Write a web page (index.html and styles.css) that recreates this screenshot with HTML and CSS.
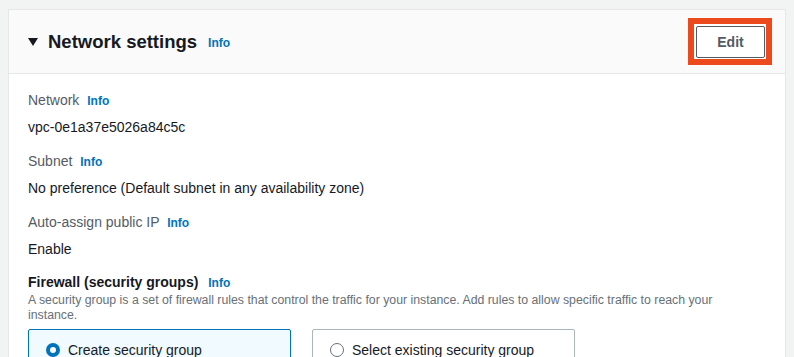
FILE: index.html
```html
<!DOCTYPE html>
<html lang="en">
  <head>
    <meta charset="UTF-8" />
    <meta name="viewport" content="width=device-width, initial-scale=1.0" />
    <title>Network settings</title>
    <link rel="stylesheet" href="styles.css">
  </head>
  <body>
    <div class="panel">
      <div class="panel-header">
        <div class="title">
          <span class="caret"></span>
          <h2>Network settings</h2>
          <a class="info" href="#">Info</a>
        </div>
        <div class="highlight">
          <button class="edit-button">Edit</button>
        </div>
      </div>
      <div class="panel-body">
        <div class="field">
          <div class="label">Network <a class="info" href="#">Info</a></div>
          <div class="value">vpc-0e1a37e5026a84c5c</div>
        </div>
        <div class="field">
          <div class="label">Subnet <a class="info" href="#">Info</a></div>
          <div class="value">No preference (Default subnet in any availability zone)</div>
        </div>
        <div class="field">
          <div class="label">Auto-assign public IP <a class="info" href="#">Info</a></div>
          <div class="value">Enable</div>
        </div>
        <div class="field firewall">
          <div class="label strong">Firewall (security groups) <a class="info" href="#">Info</a></div>
          <p class="desc">A security group is a set of firewall rules that control the traffic for your instance. Add rules to allow specific traffic to reach your instance.</p>
          <div class="choices">
            <label class="choice selected">
              <span class="radio"></span>
              Create security group
            </label>
            <label class="choice">
              <span class="radio"></span>
              Select existing security group
            </label>
          </div>
        </div>
      </div>
    </div>
  </body>
</html>
```
FILE: styles.css
```css
* {
  margin: 0;
  padding: 0;
  box-sizing: border-box;
}
html,
body {
  width: 100%;
  height: 100%;
  overflow: hidden;
}
body {
  background: #f2f3f3;
  font-family: "Liberation Sans", Arial, sans-serif;
  font-size: 14px;
  line-height: 20px;
  color: #16191f;
  padding: 9px 8px 0 8px;
}
.panel {
  background: #fff;
  border: 1px solid #e5e7e8;
  border-bottom: none;
  height: 400px;
}
.panel-header {
  height: 64px;
  background: #fafafa;
  border-bottom: 1px solid #e5e7e8;
  display: flex;
  align-items: center;
  justify-content: space-between;
  padding: 0 13px 0 19px;
}
.title {
  display: flex;
  align-items: center;
}
.caret {
  width: 0;
  height: 0;
  border-left: 5.5px solid transparent;
  border-right: 5.5px solid transparent;
  border-top: 8px solid #16191f;
  margin-right: 10px;
  margin-top: 1px;
}
h2 {
  font-size: 18.5px;
  font-weight: 700;
  line-height: 22px;
  color: #16191f;
}
.info {
  color: #0073bb;
  font-size: 12px;
  font-weight: 700;
  text-decoration: none;
  margin-left: 8px;
}
.title .info {
  margin-left: 11px;
  margin-top: 3px;
}
.highlight {
  border: 6px solid #ec4a1c;
  padding: 2px 1px 1px 2px;
  background: #fff;
  margin-top: -1px;
}
.edit-button {
  display: block;
  width: 69px;
  height: 32px;
  background: #fff;
  border: 1px solid #545b64;
  border-radius: 2px;
  color: #545b64;
  font-family: inherit;
  font-size: 14px;
  font-weight: 700;
}
.panel-body {
  padding: 16px 20px 0 19px;
}
.field {
  margin-bottom: 14px;
}
.label {
  color: #545b64;
}
.label .info {
  margin-left: 4px;
}
.label.strong {
  color: #16191f;
  font-weight: 700;
}
.label.strong .info {
  margin-left: 6px;
}
.value {
  margin-top: 6px;
}
.firewall {
  margin-top: -1px;
}
.desc {
  font-size: 12.3px;
  line-height: 15px;
  color: #687078;
  padding-right: 30px;
}
.choices {
  display: flex;
  gap: 21px;
  margin-top: 6px;
}
.choice {
  width: 263px;
  height: 44px;
  border: 1px solid #aab7b8;
  border-radius: 2px;
  display: flex;
  align-items: flex-start;
  padding: 10px 0 0 17px;
  font-size: 14px;
  color: #16191f;
}
.choice.selected {
  border-color: #0073bb;
  background: #f1faff;
}
.radio {
  width: 14px;
  height: 14px;
  border: 1px solid #687078;
  border-radius: 50%;
  margin: 3px 8px 0 0;
  background: #fff;
}
.selected .radio {
  border: 4px solid #0073bb;
}
```
